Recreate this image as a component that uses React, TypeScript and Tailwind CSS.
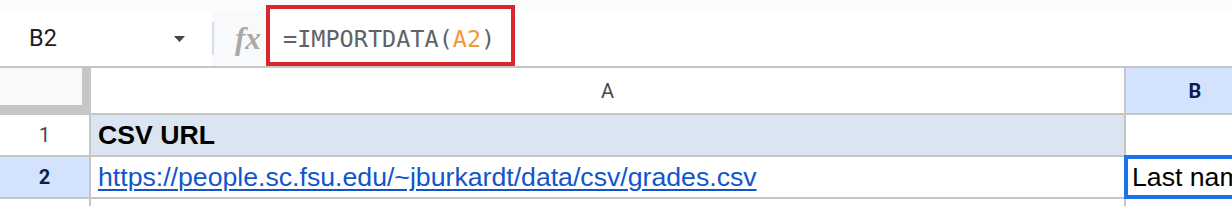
import React from 'react';

const LINE = 'border-[#c4c7c5]';

function FormulaBar() {
  return (
    <div className="relative flex h-[57px] border-b-2 border-[#c4c7c5] bg-white">
      {/* name box */}
      <div className="flex w-[212px] shrink-0 items-center justify-between bg-white pl-[29px] pr-[27px]">
        <span className="font-['Roboto'] text-[23.5px] text-[#1f1f1f]">B2</span>
        <svg width="11" height="6" viewBox="0 0 11 6" className="mt-[1px]">
          <polygon points="0,0 11,0 5.5,6" fill="#444746" />
        </svg>
      </div>
      {/* fx */}
      <div className="flex w-[54px] shrink-0 items-center bg-[#f8f9fa]">
        <div className="h-[33px] w-[2px] bg-[#d6dde7]" />
        <span className="ml-[21px] font-['Liberation_Serif'] text-[31px] font-bold italic leading-none text-[#a8a8a8]">
          fx
        </span>
      </div>
      {/* formula input */}
      <div className="flex flex-1 items-center pl-[17px] pt-[2px] font-['DejaVu_Sans_Mono'] text-[23.5px] text-[#5f6368]">
        <span>=IMPORTDATA(</span>
        <span className="text-[#f29a3a]">A2</span>
        <span>)</span>
      </div>
      {/* annotation box */}
      <div className="absolute left-[266px] top-[-6px] h-[61px] w-[249px] border-4 border-[#d8282d]" />
    </div>
  );
}

export default function App() {
  return (
    <div className="h-[206px] w-[1232px] overflow-hidden bg-white font-['Liberation_Sans']">
      <div className="h-[11px] bg-[#f9fbfd]" />
      <FormulaBar />

      {/* column headers */}
      <div className={`flex h-[47px] border-b-2 ${LINE}`}>
        <div className="flex h-full w-[91px] shrink-0 flex-col bg-[#c4c7c5]">
          <div className="h-[37px] w-[82px] bg-[#f8f9fa]" />
        </div>
        <div className={`flex w-[1035px] shrink-0 items-center justify-center border-r-2 ${LINE} font-['Roboto'] text-[20px] text-[#444746]`}>
          A
        </div>
        <div className="flex w-[138px] shrink-0 items-center justify-center bg-[#d3e3fd] font-['Roboto'] text-[20px] font-bold text-[#0b1d4d]">
          B
        </div>
      </div>

      {/* row 1 */}
      <div className={`flex h-[42px] border-b-2 ${LINE}`}>
        <div className={`flex w-[91px] shrink-0 items-center justify-center border-r-2 ${LINE} font-['Roboto'] text-[20px] text-[#444746]`}>
          1
        </div>
        <div className={`flex w-[1035px] shrink-0 items-center border-r-2 ${LINE} bg-[#dbe5f1] pl-[7px] text-[26.67px] font-bold text-black`}>
          CSV URL
        </div>
        <div className="flex-1" />
      </div>

      {/* row 2 */}
      <div className={`relative flex h-[42px] border-b-2 ${LINE}`}>
        <div className={`flex w-[91px] shrink-0 items-center justify-center border-r-2 ${LINE} bg-[#d3e3fd] font-['Roboto'] text-[20px] font-bold text-[#0b1d4d]`}>
          2
        </div>
        <div className={`flex w-[1035px] shrink-0 items-center border-r-2 ${LINE} pl-[7px] text-[26.67px] text-[#1155cc]`}>
          <a href="#" className="underline decoration-[2px] underline-offset-[3px]">
            https://people.sc.fsu.edu/~jburkardt/data/csv/grades.csv
          </a>
        </div>
        <div className="flex flex-1 items-center overflow-hidden whitespace-nowrap pl-[6px] text-[26.67px] text-black">
          Last name
        </div>
        {/* selection */}
        <div className="absolute left-[1124px] top-[-2px] h-[44px] w-[120px] border-4 border-[#1a73e8]" />
      </div>

      {/* row 3 */}
      <div className="flex h-[10px]">
        <div className={`w-[91px] shrink-0 border-r-2 ${LINE}`} />
        <div className={`w-[1035px] shrink-0 border-r-2 ${LINE}`} />
      </div>
    </div>
  );
}
